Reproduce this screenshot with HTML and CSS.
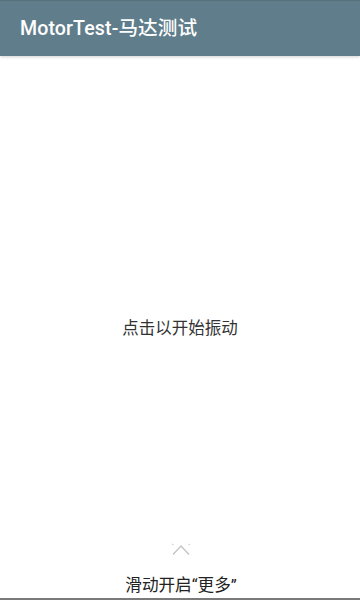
FILE: index.html
```html
<!DOCTYPE html>
<html lang="zh">
<head>
<meta charset="utf-8">
<title>MotorTest</title>
<link rel="stylesheet" href="styles.css">
</head>
<body>
<div class="app">
  <header class="toolbar">
    <h1 class="title">MotorTest-马达测试</h1>
  </header>
  <main class="content">
    <p class="hint">点击以开始振动</p>
    <div class="more">
      <svg class="chevron" width="20" height="14" viewBox="0 0 20 14" aria-hidden="true">
        <path d="M2 12.5 L10 4 L18 12.5" fill="none" stroke="#c4c4c4" stroke-width="1.4"/>
        <path d="M1 2 L2.5 3" fill="none" stroke="#d4d4d4" stroke-width="1.2"/>
        <path d="M19 2 L17.5 3" fill="none" stroke="#d4d4d4" stroke-width="1.2"/>
      </svg>
      <span class="more-text">滑动开启“更多”</span>
    </div>
  </main>
</div>
</body>
</html>
```
FILE: styles.css
```css
html, body {
  margin: 0;
  padding: 0;
  background: #ffffff;
}
body {
  font-family: Roboto, "Noto Sans CJK SC", sans-serif;
}
.app {
  width: 360px;
  height: 600px;
  display: flex;
  flex-direction: column;
  overflow: hidden;
}
.toolbar {
  height: 56px;
  flex: none;
  background: #607d8b;
  border-top: 1px solid #56707c;
  box-sizing: border-box;
  display: flex;
  align-items: center;
  padding: 0 20px;
  box-shadow: 0 1px 3px rgba(0,0,0,0.18);
  position: relative;
  z-index: 1;
}
.title {
  margin: 0;
  font-size: 19.6px;
  font-weight: 500;
  color: #ffffff;
  letter-spacing: 0.1px;
  line-height: 1;
  padding-top: 1px;
}
.content {
  flex: 1;
  display: grid;
  border-bottom: 2px solid #7a7a7a;
}
.hint {
  grid-area: 1 / 1;
  align-self: center;
  justify-self: center;
  margin: 0;
  font-size: 16.5px;
  color: #333333;
  font-family: "Noto Sans CJK SC", sans-serif;
  line-height: 20px;
}
.more {
  grid-area: 1 / 1;
  align-self: end;
  justify-self: center;
  display: flex;
  flex-direction: column;
  align-items: center;
  padding-bottom: 2px;
  padding-left: 2px;
}
.chevron {
  display: block;
  margin-bottom: 20px;
}
.more-text {
  font-family: Roboto, "Noto Sans CJK SC", sans-serif;
  font-size: 16.6px;
  color: #222222;
  line-height: 20px;
}
```
